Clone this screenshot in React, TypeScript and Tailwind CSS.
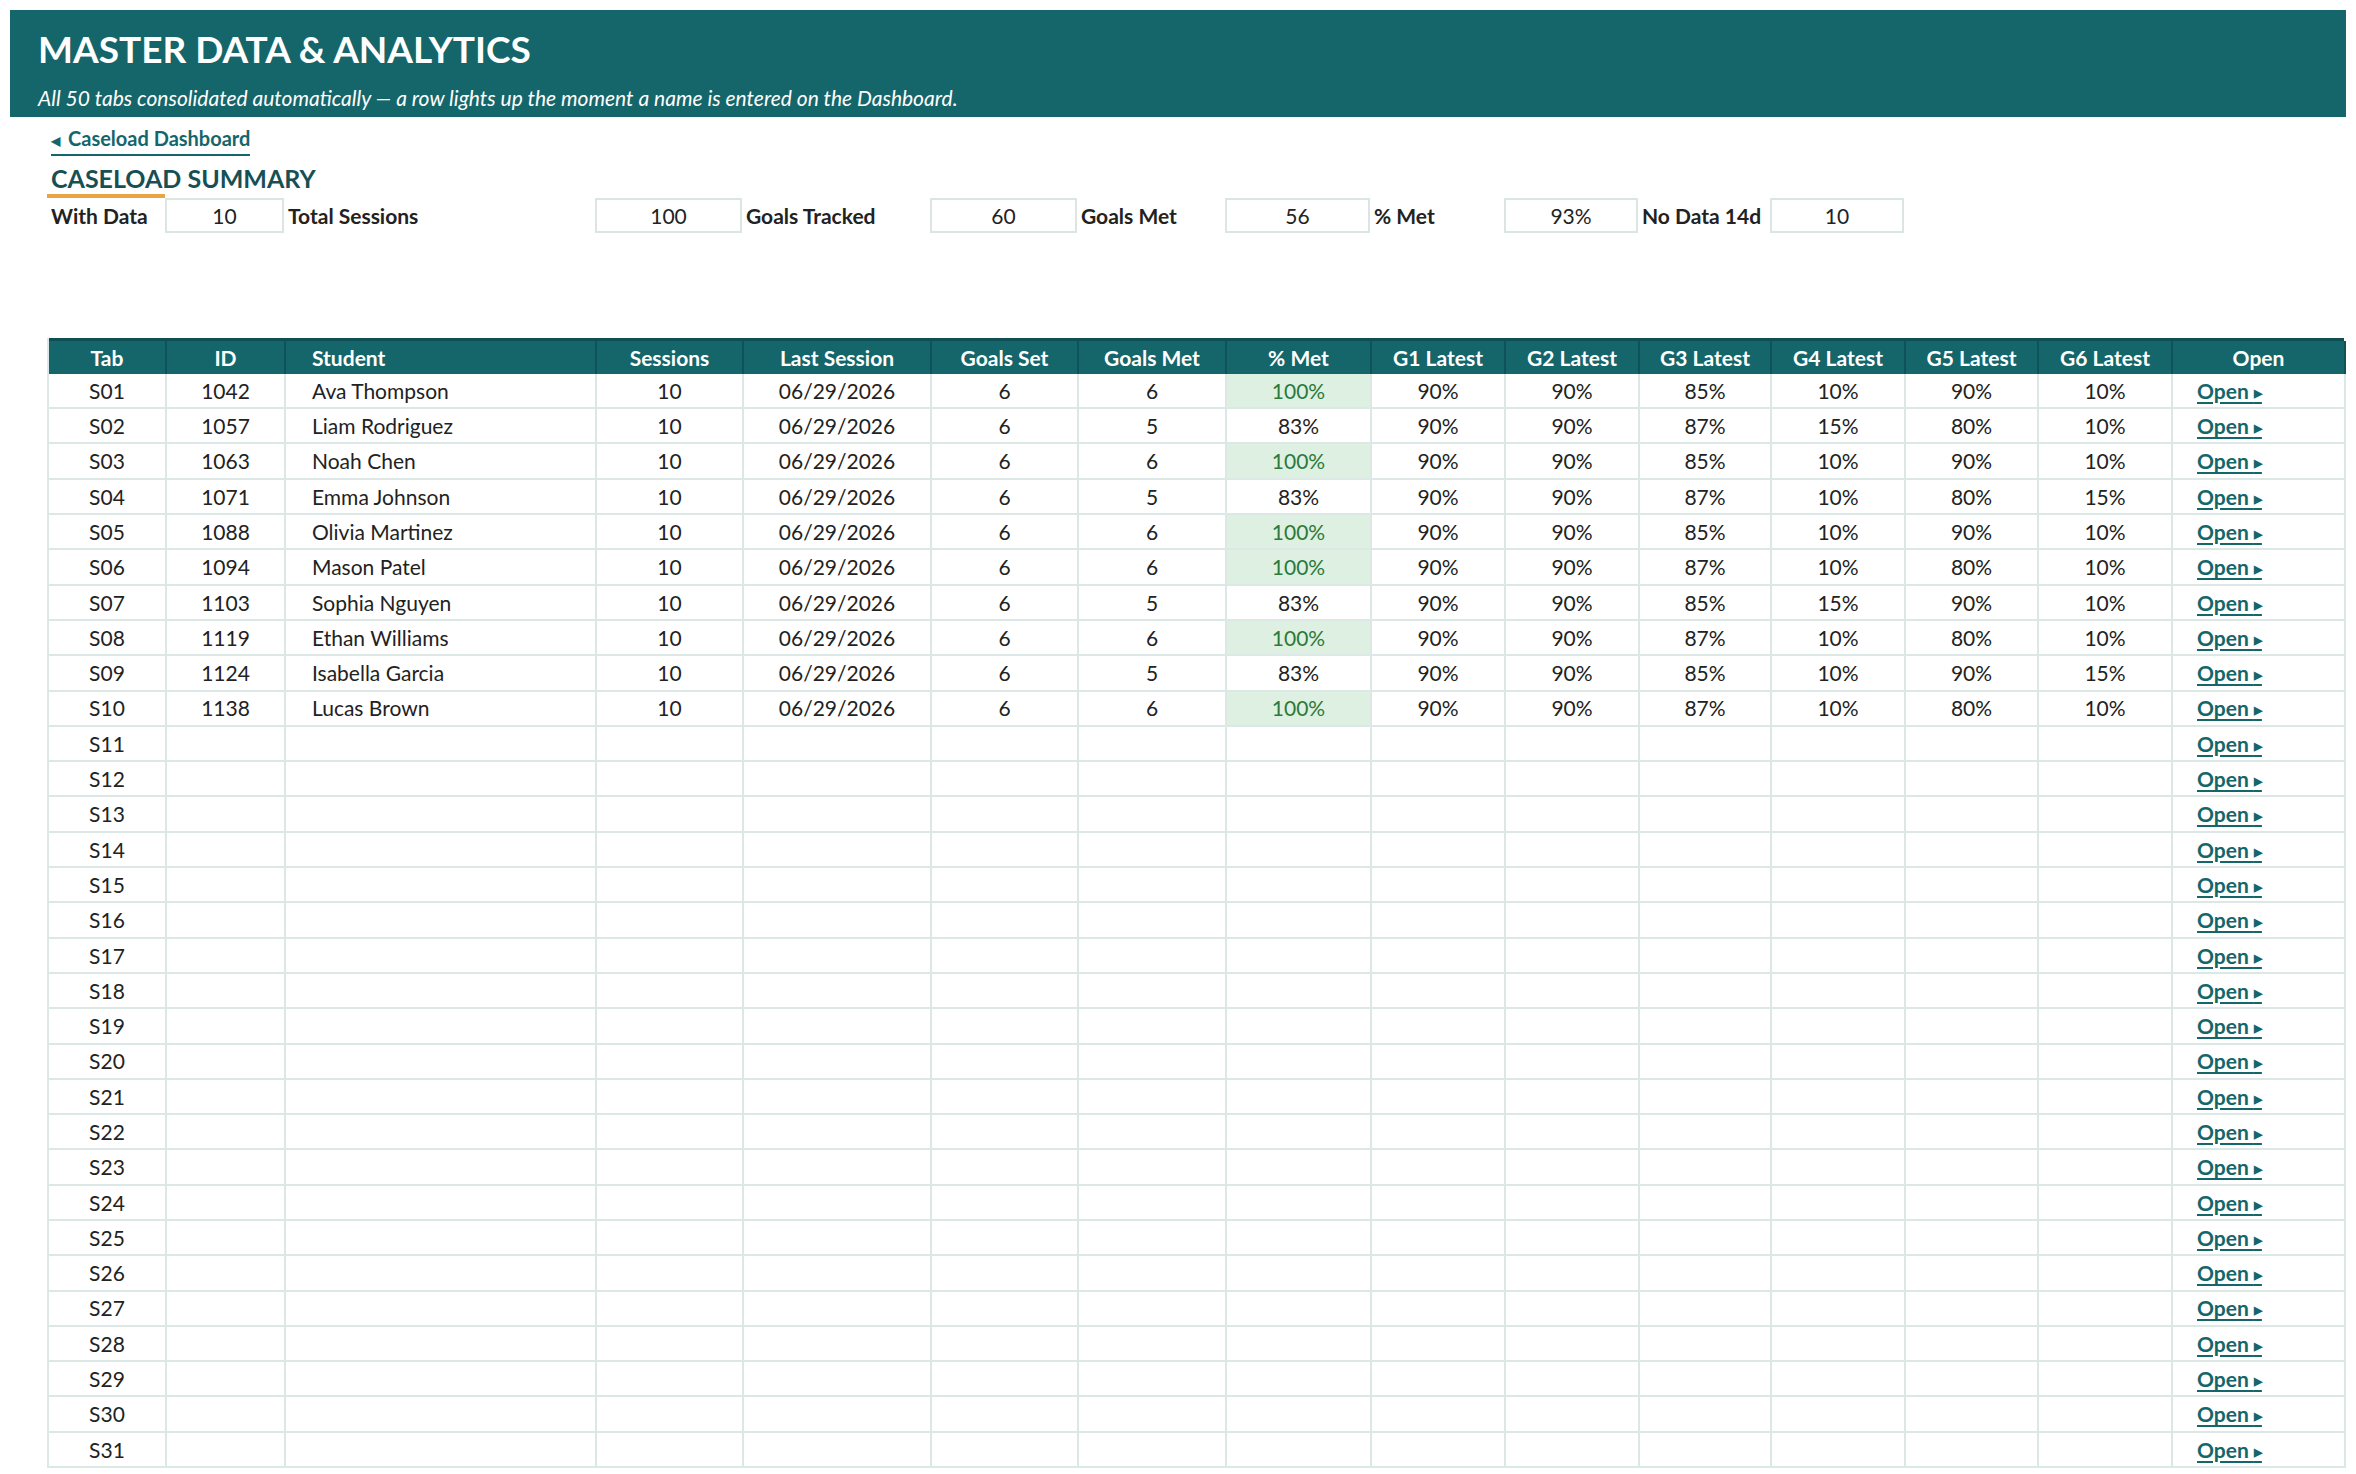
import React from 'react';

const COLS = 'grid grid-cols-[118px_119px_311px_147px_188px_147px_148px_145px_134px_134px_132px_134px_133px_134px_173px]';

const students = [
  ['1042', 'Ava Thompson', 6, '100%', ['90%', '90%', '85%', '10%', '90%', '10%']],
  ['1057', 'Liam Rodriguez', 5, '83%', ['90%', '90%', '87%', '15%', '80%', '10%']],
  ['1063', 'Noah Chen', 6, '100%', ['90%', '90%', '85%', '10%', '90%', '10%']],
  ['1071', 'Emma Johnson', 5, '83%', ['90%', '90%', '87%', '10%', '80%', '15%']],
  ['1088', 'Olivia Martinez', 6, '100%', ['90%', '90%', '85%', '10%', '90%', '10%']],
  ['1094', 'Mason Patel', 6, '100%', ['90%', '90%', '87%', '10%', '80%', '10%']],
  ['1103', 'Sophia Nguyen', 5, '83%', ['90%', '90%', '85%', '15%', '90%', '10%']],
  ['1119', 'Ethan Williams', 6, '100%', ['90%', '90%', '87%', '10%', '80%', '10%']],
  ['1124', 'Isabella Garcia', 5, '83%', ['90%', '90%', '85%', '10%', '90%', '15%']],
  ['1138', 'Lucas Brown', 6, '100%', ['90%', '90%', '87%', '10%', '80%', '10%']],
] as const;

const headers = ['Tab', 'ID', 'Student', 'Sessions', 'Last Session', 'Goals Set', 'Goals Met', '% Met', 'G1 Latest', 'G2 Latest', 'G3 Latest', 'G4 Latest', 'G5 Latest', 'G6 Latest', 'Open'];

function Cell({ children, left, className = '' }: { children?: React.ReactNode; left?: boolean; className?: string }) {
  return (
    <div className={`h-[35.3px] border-r-2 border-b-2 border-[#dbe8e6] flex items-center overflow-hidden whitespace-nowrap ${left ? 'pl-[26px]' : 'justify-center'} ${className}`}>
      {children}
    </div>
  );
}

function OpenLink() {
  return (
    <span className="text-[#15666b] font-bold underline underline-offset-[3px] decoration-2 pl-6">
      Open <span className="text-[11px] align-middle">▶</span>
    </span>
  );
}

function SummaryBox({ v }: { v: string }) {
  return <div className="h-[35px] border-2 border-[#dbe5e3] flex items-center justify-center">{v}</div>;
}

function SummaryLabel({ t }: { t: string }) {
  return <div className="h-[35px] flex items-center font-bold pl-1 whitespace-nowrap overflow-hidden">{t}</div>;
}

export default function App() {
  const rows = Array.from({ length: 31 }, (_, i) => i);
  return (
    <div className="w-[2356px] h-[1474px] bg-white text-[#222] text-[21px]" style={{ fontFamily: 'Lato, "Open Sans", sans-serif' }}>
      <div className="pt-[10px] px-[10px]">
        <div className="bg-[#15666b] h-[107px] text-white pl-[28px] pt-[14px]">
          <div className="text-[37px] font-bold leading-[50px]">MASTER DATA &amp; ANALYTICS</div>
          <div className="italic text-[21px] mt-[8px]">All 50 tabs consolidated automatically — a row lights up the moment a name is entered on the Dashboard.</div>
        </div>
      </div>

      <div className="pl-[47px]">
        <div className="mt-[8px] ml-[4px] text-[#15666b] font-bold text-[20px] inline-block border-b-2 border-[#15666b] leading-[26px]">
          <span className="text-[12px] mr-2 align-middle">◀</span>Caseload Dashboard
        </div>
        <div className="mt-[6px] ml-[4px] text-[#174f54] font-bold text-[25px] leading-[32px]">CASELOAD SUMMARY</div>
        <div className="w-[118px] h-[4px] bg-[#e9a445]" />
        <div className={COLS}>
          <SummaryLabel t="With Data" />
          <SummaryBox v="10" />
          <SummaryLabel t="Total Sessions" />
          <SummaryBox v="100" />
          <SummaryLabel t="Goals Tracked" />
          <SummaryBox v="60" />
          <SummaryLabel t="Goals Met" />
          <SummaryBox v="56" />
          <SummaryLabel t="% Met" />
          <SummaryBox v="93%" />
          <SummaryLabel t="No Data 14d" />
          <SummaryBox v="10" />
        </div>

        <div className="mt-[105px] w-[2297px] border-l-2 border-[#dbe8e6]">
          <div className={`${COLS} bg-[#15666b] text-white font-bold border-t-[3px] border-[#0f4f53] h-[36px]`}>
            {headers.map((h, i) => (
              <div key={h} className={`flex items-center border-r-2 border-[#0f5257] ${i === 2 ? 'pl-[26px]' : 'justify-center'}`}>{h}</div>
            ))}
          </div>
          {rows.map(i => {
            const s = students[i];
            const tab = `S${String(i + 1).padStart(2, '0')}`;
            return (
              <div key={tab} className={COLS}>
                <Cell>{tab}</Cell>
                <Cell>{s ? s[0] : ''}</Cell>
                <Cell left>{s ? s[1] : ''}</Cell>
                <Cell>{s ? '10' : ''}</Cell>
                <Cell>{s ? '06/29/2026' : ''}</Cell>
                <Cell>{s ? '6' : ''}</Cell>
                <Cell>{s ? String(s[2]) : ''}</Cell>
                <Cell className={s && s[3] === '100%' ? 'bg-[#def0e2] text-[#2b7a3b]' : ''}>{s ? s[3] : ''}</Cell>
                {[0, 1, 2, 3, 4, 5].map(g => (
                  <Cell key={g}>{s ? s[4][g] : ''}</Cell>
                ))}
                <Cell className="!justify-start"><OpenLink /></Cell>
              </div>
            );
          })}
        </div>
      </div>
    </div>
  );
}
